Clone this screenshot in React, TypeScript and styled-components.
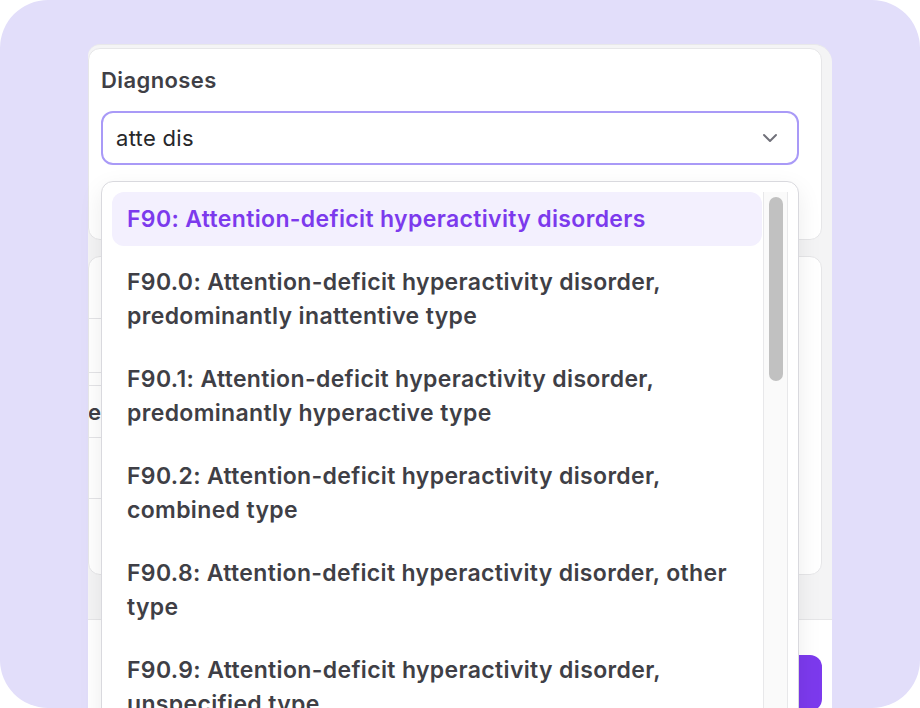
import React from 'react'
import styled, { createGlobalStyle } from 'styled-components'
import { ChevronDown } from 'lucide-react'

interface Option {
  code: string;
  label: string;
}

const options: Option[] = [
  { code: 'F90', label: 'Attention-deficit hyperactivity disorders' },
  { code: 'F90.0', label: 'Attention-deficit hyperactivity disorder, predominantly inattentive type' },
  { code: 'F90.1', label: 'Attention-deficit hyperactivity disorder, predominantly hyperactive type' },
  { code: 'F90.2', label: 'Attention-deficit hyperactivity disorder, combined type' },
  { code: 'F90.8', label: 'Attention-deficit hyperactivity disorder, other type' },
  { code: 'F90.9', label: 'Attention-deficit hyperactivity disorder, unspecified type' },
];

const App: React.FC = () => {
  return (
    <>
      <GlobalStyle />
      <Frame>
        <Panel>
          <Body>
            <Card>
              <Label>Diagnoses</Label>
              <Field>
                <Input>
                  <Query>atte dis</Query>
                  <ChevronDown size={24} strokeWidth={2} color="#71717a" />
                </Input>
                <Dropdown>
                  <Options>
                    {options.map((o, i) => (
                      <Item key={o.code} $active={i === 0}>
                        {o.code}: {o.label}
                      </Item>
                    ))}
                  </Options>
                  <Track>
                    <Thumb />
                  </Track>
                </Dropdown>
              </Field>
            </Card>
            <DetailsCard>
              <Row $height={62} $bottom />
              <Row $height={54} $bottom />
              <Row $height={53} $top $bottom $gap>
                <Cell>Occurrence</Cell>
              </Row>
              <Row $height={61} $bottom />
            </DetailsCard>
          </Body>
          <Footer>
            <SaveButton>Add diagnosis</SaveButton>
          </Footer>
        </Panel>
      </Frame>
    </>
  )
}
export default App;

const GlobalStyle = createGlobalStyle`
  * { box-sizing: border-box; }
  body {
    margin: 0;
    background: #ffffff;
    font-family: Inter, "Noto Sans", sans-serif;
  }
`;

const Frame = styled.div`
  width: 920px;
  height: 708px;
  background: #e2defa;
  border-radius: 48px;
  overflow: hidden;
  padding: 44px 88px 0 88px;
`;

const Panel = styled.div`
  width: 744px;
  height: 664px;
  background: #f4f4f5;
  border-top: 1px solid #e8e8ea;
  border-radius: 12px 18px 0 0;
  display: flex;
  flex-direction: column;
`;

const Body = styled.div`
  display: flex;
  flex-direction: column;
  gap: 16px;
  padding: 3px 10px 44px 0;
`;

const Card = styled.div`
  position: relative;
  z-index: 2;
  height: 192px;
  background: #ffffff;
  border: 1px solid #e6e6e8;
  border-radius: 12px;
  padding: 18px 22px 0 12px;
`;

const Label = styled.div`
  font-size: 22px;
  line-height: 26px;
  font-weight: 600;
  letter-spacing: 0.4px;
  color: #3f3f46;
  margin-bottom: 18px;
`;

const Field = styled.div`
  position: relative;
`;

const Input = styled.div`
  height: 54px;
  border: 2px solid #a99af7;
  border-radius: 12px;
  display: flex;
  align-items: center;
  justify-content: space-between;
  padding: 0 15px 0 13px;
`;

const Query = styled.span`
  font-size: 22px;
  letter-spacing: 0.3px;
  color: #27272a;
`;

const Dropdown = styled.div`
  position: absolute;
  top: calc(100% + 16px);
  left: 0;
  right: 0;
  height: 600px;
  z-index: 10;
  display: flex;
  gap: 1px;
  padding: 10px;
  background: #ffffff;
  border: 1px solid #d9d9de;
  border-radius: 12px;
  box-shadow: 0 8px 24px rgba(0, 0, 0, 0.08);
`;

const Options = styled.div`
  flex: 1;
  display: flex;
  flex-direction: column;
  gap: 9px;
`;

const Item = styled.div<{ $active?: boolean }>`
  padding: 10px 15px;
  border-radius: 12px;
  font-size: 23px;
  line-height: 34px;
  font-weight: 600;
  letter-spacing: 0.35px;
  color: ${p => (p.$active ? '#7c3aed' : '#3f3f46')};
  background: ${p => (p.$active ? '#f3f0fe' : 'transparent')};
`;

const Track = styled.div`
  width: 25px;
  background: #fafafa;
  border-left: 1px solid #e8e8ea;
  border-right: 1px solid #e8e8ea;
  padding: 5px 4px 0 5px;
`;

const Thumb = styled.div`
  height: 184px;
  border-radius: 7px;
  background: #c1c1c1;
`;

const DetailsCard = styled.div`
  height: 319px;
  background: #ffffff;
  border: 1px solid #e6e6e8;
  border-radius: 12px;
  padding-right: 30px;
  overflow: hidden;
`;

const Row = styled.div<{ $height: number; $top?: boolean; $bottom?: boolean; $gap?: boolean }>`
  height: ${p => p.$height}px;
  margin-top: ${p => (p.$gap ? '12px' : '0')};
  border-top: ${p => (p.$top ? '1px solid #e4e4e7' : 'none')};
  border-bottom: ${p => (p.$bottom ? '1px solid #e4e4e7' : 'none')};
  display: flex;
  align-items: center;
`;

const Cell = styled.div`
  width: 12px;
  overflow: hidden;
  display: flex;
  justify-content: flex-end;
  white-space: nowrap;
  font-size: 22px;
  font-weight: 600;
  color: #3f3f46;
`;

const Footer = styled.div`
  flex: 1;
  background: #ffffff;
  border-top: 1px solid #e6e6e8;
  display: flex;
  justify-content: flex-end;
  align-items: flex-start;
  padding: 35px 10px 0 0;
`;

const SaveButton = styled.button`
  height: 56px;
  padding: 0 23px;
  border: none;
  border-radius: 12px;
  background: #7c3aed;
  color: #ffffff;
  font-family: inherit;
  font-size: 20px;
  font-weight: 600;
`;
